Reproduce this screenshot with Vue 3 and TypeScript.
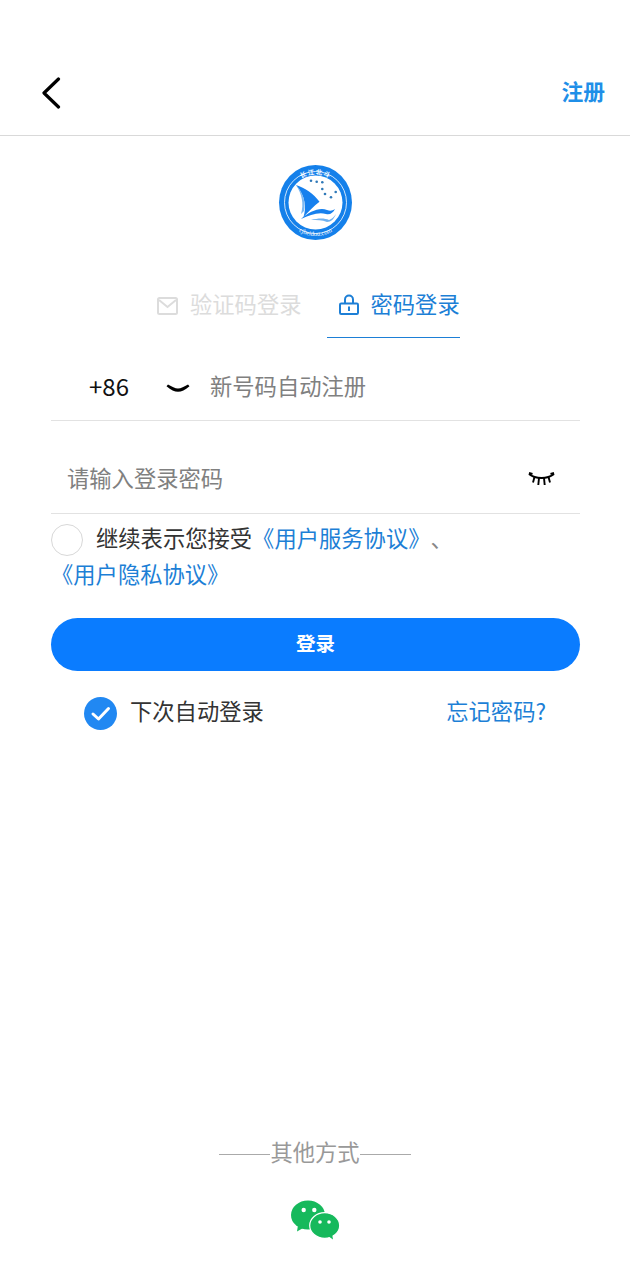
<script setup lang="ts">
import { ref } from "vue";

const activeTab = ref<"code" | "password">("password");
const agreed = ref(false);
const autoLogin = ref(true);
const stars: [number, number][] = [
  [33, 15.7],
  [38.7, 16.7],
  [44.3, 17.3],
  [44.3, 24],
  [47, 29],
  [53, 32.3],
  [57.7, 27],
];
</script>

<template>
  <div class="page">
    <header class="nav-bar">
      <svg class="back-icon" viewBox="0 0 20 32" width="20" height="32">
        <path d="M17.500 2 3 16l14.500 14" fill="none" stroke="#000" stroke-width="3.200" stroke-linecap="round" stroke-linejoin="round" />
      </svg>
      <span class="register">注册</span>
    </header>

    <div class="logo">
      <svg viewBox="0 0 74 75" width="74" height="75">
        <defs>
          <path id="logo-top" d="M9.500 37.500a28 28 0 0 1 56 0" />
          <path id="logo-bottom" d="M4 37.500a33.500 33.500 0 0 0 67 0" />
        </defs>
        <ellipse cx="37.500" cy="37.500" rx="36.500" ry="37.500" fill="#1480ea" />
        <circle cx="37.500" cy="37.500" r="31" fill="none" stroke="#fff" stroke-width=".8" />
        <circle cx="37.500" cy="37.500" r="27" fill="#fff" />
        <text class="logo-cn">
          <textPath href="#logo-top" startOffset="50%" text-anchor="middle">长江北斗</textPath>
        </text>
        <text class="logo-en">
          <textPath href="#logo-bottom" startOffset="50%" text-anchor="middle">cjbeidou.com</textPath>
        </text>
        <circle v-for="(s, i) in stars" :key="i" :cx="s[0]" :cy="s[1]" r="1.300" fill="#2f79b8" />
        <path d="M18 20c9 3 18 9 23.500 16.700C36 41 31 46 25.500 52c3-9 2-21-7.500-32Z" fill="#1680ee" />
        <path d="M18 20c6 9 8 19 5 29l3-3c2-9-1-19-8-26Z" fill="#7cb8f2" />
        <path d="M23 54c8-7 18-12 26-9 3 1 5 1 8-1-2 4-5 6-9 5-8-2-16 1-25 5Z" fill="#1680ee" />
        <path d="M33 55c7-2 14-2 18 0 3-1 5-3 7-6-2 5-5 8-9 8-5-2-10-2-16-2Z" fill="#6fb1f0" />
      </svg>
    </div>

    <div class="tabs">
      <div class="tab" :class="{ active: activeTab === 'code' }">
        <svg class="mail-icon" viewBox="0 0 21 18" width="21" height="18">
          <rect x="1" y="1" width="19" height="16" rx="1.500" fill="none" stroke="currentColor" stroke-width="2" />
          <path d="m2 3 8.500 7L19 3" fill="none" stroke="currentColor" stroke-width="2" />
        </svg>
        <span>验证码登录</span>
      </div>
      <div class="tab" :class="{ active: activeTab === 'password' }">
        <svg viewBox="0 0 20 21" width="20" height="21">
          <rect x="1" y="9.500" width="18" height="10.500" rx="1.200" fill="none" stroke="currentColor" stroke-width="2" />
          <path d="M6 9.500V5.500a4 4 0 0 1 8 0V9.500" fill="none" stroke="currentColor" stroke-width="2" />
          <rect x="9" y="12.500" width="2" height="4.500" fill="currentColor" />
        </svg>
        <span>密码登录</span>
      </div>
    </div>

    <form class="login-form" @submit.prevent>
      <div class="field phone-field">
        <span class="area-code">+86</span>
        <svg class="area-arrow" viewBox="0 0 24 8" width="24" height="8">
          <path d="M.5 2.200 2 .6C6 3 9 4.500 12 4.500S18 3 22 .6l1.500 1.600C19 6 15.500 7.800 12 7.800S5 6 .5 2.200Z" fill="#000" />
        </svg>
        <input class="text-input" type="tel" placeholder="新号码自动注册" />
      </div>

      <div class="field password-field">
        <input class="text-input" type="password" placeholder="请输入登录密码" />
        <svg class="eye-icon" viewBox="0 0 27 14" width="27" height="14">
          <path d="M1 2c4 3.200 8 4 12.500 4S22 5.200 26 2" fill="none" stroke="#000" stroke-width="2.200" />
          <path d="m1 1 3.500 1M26 1l-3.500 1M6.500 5 5 10.500M11 6l-.7 7M16 6l.7 7M20.500 5l1.500 5.500" fill="none" stroke="#000" stroke-width="1.900" />
        </svg>
      </div>

      <p class="agreement">
        <span class="radio" :class="{ checked: agreed }"></span>继续表示您接受<a class="link">《用户服务协议》</a><span class="dot">、</span><a class="link nowrap">《用户隐私协议》</a>
      </p>

      <button class="login-btn" type="submit"><span>登录</span></button>

      <div class="login-options">
        <label class="auto-login">
          <svg v-if="autoLogin" viewBox="0 0 33 33" width="33" height="33">
            <circle cx="16.500" cy="16.500" r="16.500" fill="#2188f2" />
            <path d="m9 17 5.500 5L24.500 11.500" fill="none" stroke="#fff" stroke-width="3" stroke-linecap="round" stroke-linejoin="round" />
          </svg>
          <span>下次自动登录</span>
        </label>
        <a class="link forgot">忘记密码?</a>
      </div>
    </form>

    <footer class="other-login">
      <div class="other-title"><span>其他方式</span></div>
      <svg viewBox="0 0 49 40" width="49" height="40">
        <ellipse cx="17" cy="15" rx="17" ry="14.500" fill="#16b95c" />
        <path d="M7 25 6 31.500l7-4Z" fill="#16b95c" />
        <ellipse cx="33.700" cy="25.500" rx="15" ry="12.800" fill="#16b95c" stroke="#fff" stroke-width="1.200" />
        <path d="m37 36 5 3.500-1-6Z" fill="#16b95c" />
        <circle cx="12.700" cy="10" r="2.200" fill="#fff" />
        <circle cx="23.300" cy="10" r="2.200" fill="#fff" />
        <circle cx="29" cy="22" r="1.800" fill="#fff" />
        <circle cx="38" cy="22" r="1.800" fill="#fff" />
      </svg>
    </footer>
  </div>
</template>

<style>
html,
body {
  margin: 0;
  background: #fff;
}
</style>

<style scoped>
.page {
  display: flex;
  flex-direction: column;
  width: 630px;
  height: 1280px;
  box-sizing: border-box;
  font-family: "Noto Sans CJK SC", "Noto Sans", sans-serif;
  font-size: 22.300px;
  color: #333;
  overflow: hidden;
}

.nav-bar {
  display: flex;
  align-items: center;
  justify-content: space-between;
  height: 136px;
  box-sizing: border-box;
  padding: 50px 25px 0 41px;
  border-bottom: 1px solid #d9d9d9;
}

.register {
  padding-bottom: 4px;
  font-size: 21.800px;
  font-weight: 700;
  color: #1f8fe8;
}

.logo {
  display: flex;
  justify-content: center;
  margin-top: 29px;
  height: 75px;
}

.logo-cn {
  font-size: 6.500px;
  font-weight: 700;
  fill: #fff;
  font-family: "Noto Sans CJK SC", serif;
  letter-spacing: 1px;
}

.logo-en {
  font-size: 6.500px;
  fill: #fff;
  font-family: "Liberation Serif", serif;
}

.tabs {
  display: flex;
  gap: 25.500px;
  margin-top: 34px;
  padding-left: 157px;
}

.tab {
  display: flex;
  align-items: center;
  gap: 12px;
  height: 64px;
  box-sizing: border-box;
  padding-bottom: 2px;
  color: #dcdcdc;
}

.tab span {
  padding-bottom: 4px;
}

.mail-icon {
  margin-top: 2px;
}

.tab.active {
  padding: 0 0 2px 11.500px;
  color: #1d7fd6;
  border-bottom: 1px solid #1d7fd6;
}

.login-form {
  display: flex;
  flex-direction: column;
  padding: 0 50px 0 51px;
}

.field {
  display: flex;
  align-items: center;
  border-bottom: 1px solid #e2e2e2;
  box-sizing: border-box;
}

.phone-field {
  height: 83px;
  padding-top: 12px;
}

.password-field {
  height: 93px;
  padding: 20px 25px 0 16px;
}

.area-code {
  width: 77px;
  padding-left: 38px;
  color: #111;
  font-size: 24px;
}

.area-arrow {
  margin: 5px 20px 0 0;
}

.eye-icon {
  margin-top: 4px;
}

.text-input {
  flex: 1;
  min-width: 0;
  border: 0;
  outline: 0;
  padding: 0;
  background: transparent;
  font: inherit;
}

.text-input::placeholder {
  color: #808080;
  opacity: 1;
}

.agreement {
  margin: 5px 0 0;
  line-height: 36px;
  text-spacing-trim: space-all;
}

.radio {
  display: inline-block;
  width: 32px;
  height: 32px;
  box-sizing: border-box;
  margin: -4px 13px -4px 0;
  vertical-align: -5px;
  border: 1px solid #d8d8d8;
  border-radius: 50%;
}

.link {
  color: #1d7fd6;
}

.nowrap {
  white-space: nowrap;
}

.dot {
  color: #888;
}

.login-btn {
  height: 53px;
  margin-top: 27px;
  border: 0;
  border-radius: 27px;
  background: #0a7cff;
  color: #fff;
  font: inherit;
  font-size: 19.500px;
  font-weight: 700;
}

.login-btn span {
  display: block;
  padding-bottom: 4px;
}

.login-options {
  display: flex;
  align-items: center;
  justify-content: space-between;
  height: 84px;
  padding: 0 34px 0 33px;
}

.auto-login {
  display: flex;
  align-items: center;
  gap: 13px;
}

.auto-login span,
.forgot {
  padding-bottom: 6px;
}

.other-login {
  display: flex;
  flex-direction: column;
  align-items: center;
  gap: 30px;
  margin-top: auto;
  padding-bottom: 40px;
}

.other-title {
  display: flex;
  align-items: center;
  color: #999;
  line-height: 26px;
}

.other-title span {
  padding-bottom: 6px;
}

.other-title::before,
.other-title::after {
  content: "";
  width: 51px;
  height: 1px;
  background: #aaa;
}
</style>
